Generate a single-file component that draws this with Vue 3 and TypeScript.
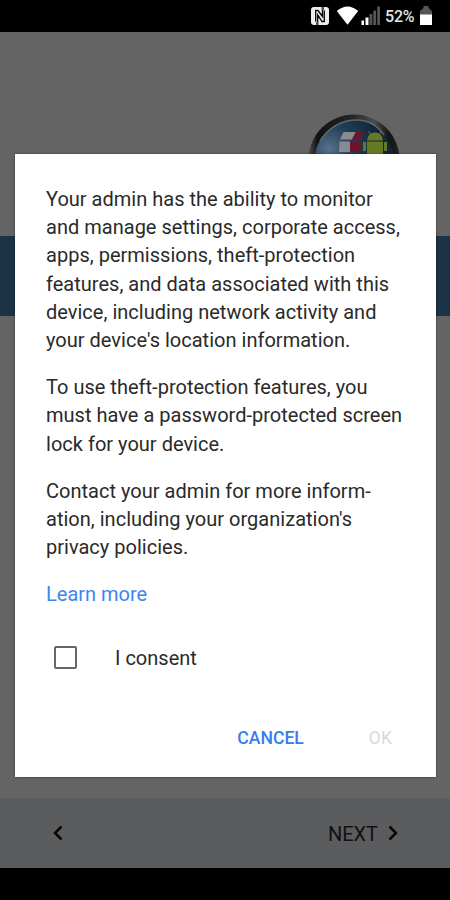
<script setup lang="ts">
import { ref } from 'vue'

const paragraphs: string[][] = [
  [
    'Your admin has the ability to monitor',
    'and manage settings, corporate access,',
    'apps, permissions, theft-protection',
    'features, and data associated with this',
    'device, including network activity and',
    "your device's location information.",
  ],
  [
    'To use theft-protection features, you',
    'must have a password-protected screen',
    'lock for your device.',
  ],
  [
    'Contact your admin for more inform-',
    "ation, including your organization's",
    'privacy policies.',
  ],
]

const consent = ref<boolean>(false)
</script>

<template>
  <div class="screen">
    <header class="status">
      <svg class="nfc" width="20" height="20" viewBox="0 0 20 20">
        <rect x="1" y="1" width="18" height="18" rx="3" fill="#eee" />
        <path d="M5.700 15.500V4.500H8L12.500 10.500V4M7.700 16V9L12 15.500H14.300V4.500" fill="none" stroke="#000" stroke-width="1.300" />
        <path d="M6 16h2.500v4H6zM11.500 0H14v4h-2.500z" fill="#000" opacity=".65" />
      </svg>
      <svg class="wifi" width="23" height="20" viewBox="0 0 23 20">
        <path d="M11.500 18.800L.8 5Q11.500-4.200 22.200 5Z" fill="#fff" />
      </svg>
      <svg class="signal" width="20" height="20" viewBox="0 0 20 20">
        <path d="M.5 14.500H3V19H.5zM4.500 11.500h3V19h-3z" fill="#fff" />
        <path d="M8.500 8h2.800v11H8.500zM12.300 4.500h2.800V19h-2.800zM16.200.5H19V19h-2.800z" fill="#555" />
      </svg>
      <span class="percent">52%</span>
      <svg class="battery" width="14" height="20" viewBox="0 0 14 20">
        <path d="M4.500 0h5v2L13 5v4H1V5l3.500-3z" fill="#555" />
        <path d="M1 8.500h12V19H1z" fill="#fff" />
      </svg>
    </header>

    <main class="backdrop">
      <div class="hero">
        <svg class="logo" width="92" height="92" viewBox="0 0 92 92">
          <defs>
            <radialGradient id="globe" cx="18%" cy="36%" r="62%">
              <stop offset="0" stop-color="#57718c" />
              <stop offset=".5" stop-color="#233f5a" />
              <stop offset="1" stop-color="#122639" />
            </radialGradient>
            <linearGradient id="rim" x1="0" y1="0" x2="1" y2="0">
              <stop offset="0" stop-color="#505050" />
              <stop offset=".1" stop-color="#101010" />
              <stop offset=".5" stop-color="#24282b" />
              <stop offset=".72" stop-color="#4c4e50" />
              <stop offset=".88" stop-color="#151515" />
              <stop offset="1" stop-color="#222" />
            </linearGradient>
          </defs>
          <circle cx="46" cy="46" r="45.500" fill="url(#rim)" />
          <circle cx="46" cy="46" r="39.500" fill="url(#globe)" />
          <path d="M12 27Q26 6 49 6Q66 6 76 21" fill="none" stroke="#606568" stroke-width="1.500" />
          <path d="M35.500 18H48l-4 7.500H32zM31.500 27.500H42V38H31z" fill="#898b90" />
          <path d="M48 18h8.500l-4.500 7.500h-8zM42 27.500h10.500V38H42z" fill="#70142b" />
          <g fill="#667923">
            <path d="M59 26.500Q60 18.500 67 18.500Q74 18.500 75 26.500zM59 27.500h16V42H59zM55 28h3v9h-3zM76 28h3v9h-3z" />
            <path d="M62.500 20l-2-3M71.500 20l2-3" stroke="#667923" stroke-width="1" />
          </g>
        </svg>
      </div>
      <div class="band"></div>
    </main>

    <footer class="wizard">
      <svg width="10" height="16" viewBox="0 0 10 16"><path d="M8.500 1.500L2 8l6.500 6.500" /></svg>
      <div class="next">
        <span>NEXT</span>
        <svg width="10" height="16" viewBox="0 0 10 16"><path d="M1.500 1.500L8 8l-6.500 6.500" /></svg>
      </div>
    </footer>
    <div class="navbar"></div>

    <section class="dialog" role="dialog">
      <p v-for="(lines, i) in paragraphs" :key="i">
        <span v-for="line in lines" :key="line" class="line">{{ line }}</span>
      </p>
      <a class="learn">Learn more</a>
      <label class="consent">
        <input v-model="consent" type="checkbox" />
        <span>I consent</span>
      </label>
      <div class="actions">
        <button class="cancel">CANCEL</button>
        <button class="ok" :disabled="!consent">OK</button>
      </div>
    </section>
  </div>
</template>

<style>
body {
  margin: 0;
  background: #000;
}
</style>

<style scoped>
.screen {
  position: relative;
  display: flex;
  flex-direction: column;
  width: 450px;
  height: 900px;
  overflow: hidden;
  background: #000;
  font-family: Roboto, sans-serif;
}
.status {
  display: flex;
  justify-content: flex-end;
  box-sizing: border-box;
  height: 32px;
  padding: 6px 17px 0 0;
}
.wifi {
  margin-left: 6px;
}
.signal {
  margin-left: 2px;
}
.percent {
  width: 30px;
  margin: 0 4px 0 4px;
  color: #e4e4e4;
  font-size: 16px;
  font-weight: 500;
  letter-spacing: -0.2px;
  line-height: 21px;
  white-space: nowrap;
}
.backdrop {
  flex: 1;
  background: #646464;
}
.hero {
  display: flex;
  justify-content: flex-end;
  box-sizing: border-box;
  height: 204px;
  padding: 82px 50px 0 0;
}
.logo {
  flex: none;
}
.band {
  height: 80px;
  background: #1b3344;
}
.wizard {
  display: flex;
  align-items: center;
  justify-content: space-between;
  box-sizing: border-box;
  height: 70px;
  padding: 0 52px 0 53px;
  background: #5b5c5e;
}
.wizard svg {
  fill: none;
  stroke: #080808;
  stroke-width: 2.5;
}
.next {
  display: flex;
  align-items: center;
  gap: 10px;
  color: #111;
  font-size: 20px;
}
.next span {
  padding-top: 2px;
}
.navbar {
  height: 32px;
}
.dialog {
  position: absolute;
  top: 154px;
  left: 15px;
  box-sizing: border-box;
  width: 421px;
  height: 623px;
  padding: 31px 30px 0 31px;
  background: #fff;
  box-shadow: 0 0 2px rgba(0, 0, 0, 0.5);
  color: #2a2a2a;
  font-size: 20px;
  line-height: 28.2px;
}
p {
  margin: 0 0 19px;
}
.line {
  display: block;
  width: max-content;
  letter-spacing: 0.015px;
  white-space: nowrap;
}
.learn {
  display: block;
  width: max-content;
  color: #4084f0;
}
.consent {
  display: flex;
  align-items: center;
  gap: 38px;
  margin: 34px 0 0 8px;
}
.consent span {
  padding-top: 1px;
}
.consent input {
  appearance: none;
  box-sizing: border-box;
  width: 23px;
  height: 23px;
  margin: 0;
  border: 2px solid #666;
  border-radius: 2px;
}
.actions {
  display: flex;
  justify-content: flex-end;
  gap: 65px;
  margin: 53px 14px 0 0;
}
button {
  padding: 0;
  border: 0;
  background: none;
  font: 500 17.6px/26px Roboto, sans-serif;
}
.cancel {
  color: #3a7cec;
}
.ok {
  color: #dadada;
  font-weight: 400;
}
</style>
